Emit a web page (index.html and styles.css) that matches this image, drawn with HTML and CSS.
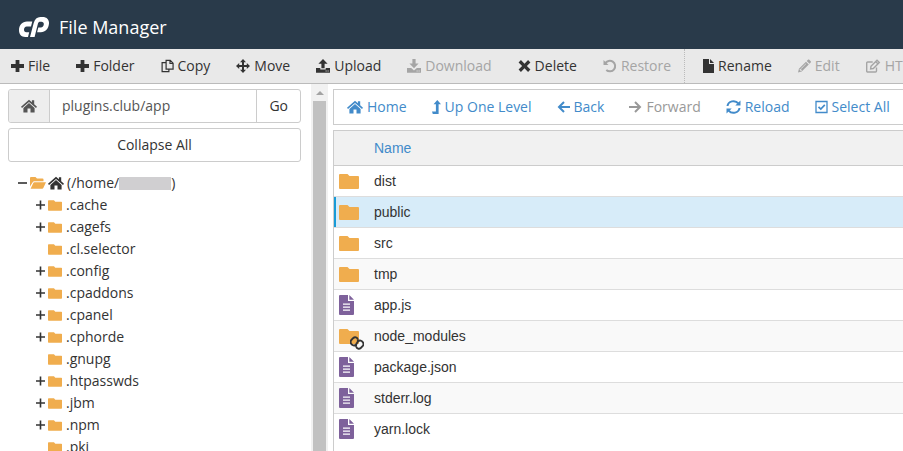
FILE: index.html
```
<!DOCTYPE html>
<html lang="en">
<head>
    <meta charset="UTF-8">
    <meta name="viewport" content="width=device-width, initial-scale=1.0">
    <title>File Manager</title>
    <link rel="stylesheet" href="styles.css">
</head>
<body>
    <!-- Icon sprite -->
    <svg class="sprite" xmlns="http://www.w3.org/2000/svg">
        <symbol id="i-plus" viewBox="0 0 13 13"><path d="M4.600.500h3.800v4.100H13v3.800H8.400v4.100H4.600V8.400H0V4.600h4.600z"/></symbol>
        <symbol id="i-copy" viewBox="0 0 14 14"><path d="M5.500 1h4.500l3 3v6.400H5.500zM9.700 1v3.300H13M5 3.300H1.200V13h7.300v-2.200" fill="none" stroke="currentColor" stroke-width="1.300"/></symbol>
        <symbol id="i-move" viewBox="0 0 14 14"><path d="M7 0l3 3.200H8v2.800h2.800V4L14 7l-3.200 3V8H8v2.800h2L7 14l-3-3.200h2V8H3.200v2L0 7l3.200-3v2H6V3.200H4z"/></symbol>
        <symbol id="i-upload" viewBox="0 0 14 14"><path d="M7 0l4.600 4.700H8.600V9.200H5.400V4.700H2.400zM0 9h4.300v1.400h5.400V9H14v4.700H0zM9.600 11.600v1h1v-1zm2 0v1h1v-1z" fill-rule="evenodd"/></symbol>
        <symbol id="i-download" viewBox="0 0 14 14"><path d="M5.400 0h3.200v4.500h3L7 9.200 2.400 4.500h3zM0 9h4.200L7 11.500 9.800 9H14v4.700H0zM9.600 11.600v1h1v-1zm2 0v1h1v-1z" fill-rule="evenodd"/></symbol>
        <symbol id="i-times" viewBox="0 0 12 13"><path d="M2.700 1L6 4.300 9.300 1l2.200 2.200-3.300 3.300 3.300 3.300L9.300 12 6 8.700 2.700 12 .5 9.800l3.300-3.300L.5 3.200z"/></symbol>
        <symbol id="i-undo" viewBox="0 0 14 14"><path d="M.5 1v5h5z"/><path d="M2.200 4.500A5.300 5.300 0 1 1 3.300 11" fill="none" stroke="currentColor" stroke-width="2"/></symbol>
        <symbol id="i-file" viewBox="0 0 11 14"><path d="M0 0h6v5h5v9H0zM7 0l4 4H7z"/></symbol>
        <symbol id="i-pencil" viewBox="0 0 14 14"><path d="M10.700.3c.5-.4 1-.4 1.500 0l1.500 1.500c.4.500.4 1 0 1.500L12.400 4.600 9.400 1.600zM8.600 2.400l3 3L4 13 0 14l1-4zM1.700 11l1.300 1.300L4 12l.1-1H3v-1l-1 .1zM8.500 4.200L3.200 9.500l.4.400L8.900 4.600z" fill-rule="evenodd"/></symbol>
        <symbol id="i-edit" viewBox="0 0 15 14"><path d="M10.500 8.500V12a1 1 0 0 1-1 1H1.700a1 1 0 0 1-1-1V4a1 1 0 0 1 1-1h5M5 7.200L11 1.300l2.300 2.300-6 5.900-2.700.5zM9.700 2.600l2.300 2.300" fill="none" stroke="currentColor" stroke-width="1.400"/></symbol>
        <symbol id="i-home" viewBox="0 0 16 14"><path d="M8 .8l2.900 2.500V1.300h2.300v4L16 7.700l-1 1.200-7-6-7 6-1-1.200z"/><path d="M8 4.100l5.600 4.800V13.500H9.500V9.500h-3v4H2.400V8.900z"/></symbol>
        <symbol id="i-up" viewBox="0 0 9 14"><path d="M5.300 0L9 4.300H6.600V14H.8L0 11.600h3.900V4.300H1.600z"/></symbol>
        <symbol id="i-left" viewBox="0 0 13 14"><path d="M7 2L2 7l5 5M2 7h11" fill="none" stroke="currentColor" stroke-width="2"/></symbol>
        <symbol id="i-right" viewBox="0 0 13 14"><path d="M6 2l5 5-5 5M11 7H0" fill="none" stroke="currentColor" stroke-width="2"/></symbol>
        <symbol id="i-reload" viewBox="0 0 15 14"><path d="M1.500 6a6 5.400 0 0 1 10.800-2.600M13.500 8a6 5.400 0 0 1-10.800 2.600" fill="none" stroke="currentColor" stroke-width="2"/><path d="M14.500.500v5H9.300zM.5 13.500v-5h5.200z"/></symbol>
        <symbol id="i-check" viewBox="0 0 13 14"><path d="M1 1.500h11v11H1z" fill="none" stroke="currentColor" stroke-width="1.300"/><path d="M3.500 6.800l2.300 2.300 4-4.200" fill="none" stroke="currentColor" stroke-width="1.700"/></symbol>
        <symbol id="i-folder" viewBox="0 0 20 15"><path d="M1 0h7.500l2 2H19a1 1 0 0 1 1 1v11a1 1 0 0 1-1 1H1a1 1 0 0 1-1-1V1a1 1 0 0 1 1-1z"/></symbol>
        <symbol id="i-folder-open" viewBox="0 0 16 12"><path d="M0 9.500V1a1 1 0 0 1 1-1h4.500L7 1.600h5.500a1 1 0 0 1 1 1v1.600H4.300a1.800 1.800 0 0 0-1.600 1z"/><path d="M4.300 5.200H16l-2.700 5.900a1.200 1.200 0 0 1-1 .6H.6l2.800-6a1 1 0 0 1 .9-.5z"/></symbol>
        <symbol id="i-doc" viewBox="0 0 15 20"><path d="M1 0h8v6h6v13a1 1 0 0 1-1 1H1a1 1 0 0 1-1-1V1a1 1 0 0 1 1-1zM10.300 0L15 4.700h-4.700zM4 8.500v1.200h7V8.500zm0 3v1.200h7v-1.200zm0 3v1.200h7v-1.200z" fill-rule="evenodd"/></symbol>
        <symbol id="i-link" viewBox="0 0 14 14"><path d="M6.800 8.400L5.900 8.900A3 3 0 0 1 2.200 3.100L3.300 2A2.700 2.700 0 0 1 7.800 3.400M7.200 5.600L8.100 5.100A3 3 0 0 1 11.800 10.900L10.700 12A2.700 2.700 0 0 1 6.200 10.600M7.800 3.400Q8.500 6 6 8M6.200 10.600Q5.500 8 8 6" fill="none" stroke="currentColor" stroke-width="1.900"/></symbol>
        <symbol id="i-expand" viewBox="0 0 9 10"><path d="M3.700.500h1.600v3.700H9v1.600H5.300v3.700H3.700V5.800H0V4.200h3.700z"/></symbol>
        <symbol id="i-collapse" viewBox="0 0 9 10"><path d="M0 4.200h9v1.600H0z"/></symbol>
    </svg>

    <header class="header">
        <svg class="logo" viewBox="0 0 30 20" role="img" aria-label="cPanel">
            <path d="M13.300 4.500L12 9.400H7.800C6 9.400 5 10.800 5 12.600c0 1.700.8 2.700 2.400 2.700h2.800L9 19.900H6.200C2.500 19.900 0 17.300 0 13.200 0 8.200 3.200 4.500 8 4.500z"/>
            <path d="M11 20l3.700-14C15.800 2 18 0 21.400 0h2.400c3.900 0 6.500 2.600 6.200 6.600-.4 5.100-3.500 8.600-8.200 8.600h-3.700l1.200-4.700h2.500c1.800 0 2.900-1.300 3-3.200.1-1.600-.8-2.600-2.300-2.600h-1.200c-1.300 0-2 .6-2.400 2L15.600 20z"/>
        </svg>
        <h1>File Manager</h1>
    </header>

    <div class="toolbar">
        <div class="tool-group">
            <button type="button"><svg class="w13"><use href="#i-plus"/></svg>File</button>
            <button type="button"><svg class="w13"><use href="#i-plus"/></svg>Folder</button>
            <button type="button"><svg class="w13"><use href="#i-copy"/></svg>Copy</button>
            <button type="button"><svg class="w14"><use href="#i-move"/></svg>Move</button>
            <button type="button"><svg class="w14"><use href="#i-upload"/></svg>Upload</button>
            <button type="button" disabled><svg class="w14"><use href="#i-download"/></svg>Download</button>
            <button type="button"><svg class="w13"><use href="#i-times"/></svg>Delete</button>
            <button type="button" disabled><svg class="w14"><use href="#i-undo"/></svg>Restore</button>
        </div>
        <div class="tool-group">
            <button type="button"><svg class="w11"><use href="#i-file"/></svg>Rename</button>
            <button type="button" disabled><svg class="w13"><use href="#i-pencil"/></svg>Edit</button>
            <button type="button" disabled><svg class="w15"><use href="#i-edit"/></svg>HTML Editor</button>
        </div>
    </div>

    <div class="main">
        <aside class="sidebar">
            <form class="path-form">
                <button type="button" class="path-home" aria-label="Home"><svg class="w16"><use href="#i-home"/></svg></button>
                <input type="text" value="plugins.club/app" aria-label="Path">
                <button type="submit" class="path-go">Go</button>
            </form>
            <button type="button" class="collapse">Collapse All</button>
            <ul class="tree">
                <li class="root">
                    <button type="button" aria-label="Collapse"><svg><use href="#i-collapse"/></svg></button>
                    <svg class="folder-open"><use href="#i-folder-open"/></svg>
                    <svg class="home"><use href="#i-home"/></svg>
                    <span class="label">(/home/<span class="redacted"></span>)</span>
                </li>
                <li><button type="button" aria-label="Expand"><svg><use href="#i-expand"/></svg></button><svg class="folder"><use href="#i-folder"/></svg>.cache</li>
                <li><button type="button" aria-label="Expand"><svg><use href="#i-expand"/></svg></button><svg class="folder"><use href="#i-folder"/></svg>.cagefs</li>
                <li class="leaf"><svg class="folder"><use href="#i-folder"/></svg>.cl.selector</li>
                <li><button type="button" aria-label="Expand"><svg><use href="#i-expand"/></svg></button><svg class="folder"><use href="#i-folder"/></svg>.config</li>
                <li><button type="button" aria-label="Expand"><svg><use href="#i-expand"/></svg></button><svg class="folder"><use href="#i-folder"/></svg>.cpaddons</li>
                <li><button type="button" aria-label="Expand"><svg><use href="#i-expand"/></svg></button><svg class="folder"><use href="#i-folder"/></svg>.cpanel</li>
                <li><button type="button" aria-label="Expand"><svg><use href="#i-expand"/></svg></button><svg class="folder"><use href="#i-folder"/></svg>.cphorde</li>
                <li class="leaf"><svg class="folder"><use href="#i-folder"/></svg>.gnupg</li>
                <li><button type="button" aria-label="Expand"><svg><use href="#i-expand"/></svg></button><svg class="folder"><use href="#i-folder"/></svg>.htpasswds</li>
                <li><button type="button" aria-label="Expand"><svg><use href="#i-expand"/></svg></button><svg class="folder"><use href="#i-folder"/></svg>.jbm</li>
                <li><button type="button" aria-label="Expand"><svg><use href="#i-expand"/></svg></button><svg class="folder"><use href="#i-folder"/></svg>.npm</li>
                <li class="leaf"><svg class="folder"><use href="#i-folder"/></svg>.pki</li>
            </ul>
        </aside>
        <div class="scrollbar">
            <span class="scroll-up"></span>
            <span class="scroll-thumb"></span>
        </div>

        <main class="content">
            <nav class="actions">
                <a href="#"><svg class="w16"><use href="#i-home"/></svg>Home</a>
                <a href="#"><svg class="w9"><use href="#i-up"/></svg>Up One Level</a>
                <a href="#"><svg class="w13"><use href="#i-left"/></svg>Back</a>
                <a href="#" class="disabled" aria-disabled="true"><svg class="w13"><use href="#i-right"/></svg>Forward</a>
                <a href="#"><svg class="w15"><use href="#i-reload"/></svg>Reload</a>
                <a href="#"><svg class="w13"><use href="#i-check"/></svg>Select All</a>
            </nav>
            <div class="file-list">
                <table class="files">
                    <thead>
                        <tr><th class="icon-col"></th><th>Name</th></tr>
                    </thead>
                    <tbody>
                        <tr><td class="icon-col"><svg class="dir"><use href="#i-folder"/></svg></td><td>dist</td></tr>
                        <tr class="selected"><td class="icon-col"><svg class="dir"><use href="#i-folder"/></svg></td><td>public</td></tr>
                        <tr><td class="icon-col"><svg class="dir"><use href="#i-folder"/></svg></td><td>src</td></tr>
                        <tr><td class="icon-col"><svg class="dir"><use href="#i-folder"/></svg></td><td>tmp</td></tr>
                        <tr><td class="icon-col"><svg class="doc"><use href="#i-doc"/></svg></td><td>app.js</td></tr>
                        <tr><td class="icon-col"><span class="linked"><svg class="dir"><use href="#i-folder"/></svg><svg class="link-badge"><use href="#i-link"/></svg></span></td><td>node_modules</td></tr>
                        <tr><td class="icon-col"><svg class="doc"><use href="#i-doc"/></svg></td><td>package.json</td></tr>
                        <tr><td class="icon-col"><svg class="doc"><use href="#i-doc"/></svg></td><td>stderr.log</td></tr>
                        <tr><td class="icon-col"><svg class="doc"><use href="#i-doc"/></svg></td><td>yarn.lock</td></tr>
                    </tbody>
                </table>
            </div>
        </main>
    </div>
</body>
</html>
```
FILE: styles.css
```
* {
    box-sizing: border-box;
}
body {
    margin: 0;
    height: 100vh;
    display: flex;
    flex-direction: column;
    overflow: hidden;
    background-color: #fff;
    color: #333;
    font-family: "Open Sans", sans-serif;
    font-size: 14px;
    line-height: 20px;
}
svg {
    fill: currentColor;
    flex: none;
    height: 14px;
}
button, input {
    font: inherit;
    color: inherit;
}
button {
    background: none;
    border: none;
    padding: 0;
    cursor: pointer;
}
.sprite {
    display: none;
}
.w9 {
    width: 9px;
}
.w11 {
    width: 11px;
}
.w13 {
    width: 13px;
}
.w14 {
    width: 14px;
}
.w15 {
    width: 15px;
}
.w16 {
    width: 16px;
}

/* Header */
.header {
    display: flex;
    align-items: center;
    gap: 10px;
    flex: none;
    padding: 15px 19px 10px;
    background-color: #293a4a;
    color: #fff;
}
.header h1 {
    margin: 0;
    font-size: 18px;
    font-weight: normal;
    line-height: 24px;
}
.logo {
    width: 30px;
    height: 20px;
}

/* Toolbar */
.toolbar {
    display: flex;
    flex: none;
    height: 35px;
    background-color: #e9e9e9;
    border-bottom: 1px solid #bbb;
    overflow: hidden;
}
.tool-group {
    display: flex;
    flex: none;
    gap: 26px;
    padding: 0 13px 0 11px;
}
.tool-group + .tool-group {
    border-left: 1px dotted #bbb;
    padding-left: 18px;
}
.tool-group button, .actions a {
    display: flex;
    align-items: center;
    gap: 4px;
    white-space: nowrap;
}
.tool-group button:disabled {
    color: #a5a5a5;
    cursor: default;
}

.main {
    display: flex;
    flex: 1;
    min-height: 0;
}

/* Sidebar */
.sidebar {
    flex: none;
    width: 311px;
    padding: 5px 10px 0 8px;
    overflow: hidden;
}
.path-form {
    display: flex;
    height: 34px;
    border: 1px solid #ccc;
    border-radius: 3px;
    overflow: hidden;
}
.path-home {
    display: flex;
    align-items: center;
    padding: 0 12px;
    background-color: #eee;
    color: #555;
}
.path-form input {
    flex: 1;
    min-width: 0;
    padding: 0 12px;
    border: solid #ccc;
    border-width: 0 1px;
    color: #555;
}
.path-go {
    padding: 0 12px;
}
.collapse {
    display: block;
    width: 100%;
    height: 34px;
    margin-top: 5px;
    border: 1px solid #ccc;
    border-radius: 3px;
}
.tree {
    list-style: none;
    margin: 10px 0 0;
    padding: 0;
}
.tree li {
    display: flex;
    align-items: center;
    height: 22px;
    padding-left: 28px;
}
.tree .root {
    padding-left: 10px;
}
.tree .leaf {
    padding-left: 40px;
}
.tree button {
    display: flex;
    margin-right: 3px;
}
.tree button svg {
    width: 9px;
    height: 10px;
}
.tree .folder {
    width: 14px;
    height: 11px;
    margin-right: 4px;
    color: #f0ad4e;
}
.tree .folder-open {
    width: 16px;
    height: 12px;
    margin-right: 2px;
    color: #f0ad4e;
}
.tree .home {
    width: 16px;
    margin-right: 3px;
}
.label {
    display: flex;
    align-items: center;
}
.redacted {
    width: 52px;
    height: 13px;
    background-color: #d0cfd1;
}

.scrollbar {
    display: flex;
    flex-direction: column;
    align-items: center;
    flex: none;
    width: 17px;
    background-color: #f1f1f1;
}
.scroll-up {
    margin: 7px 0 6px;
    border: 4px solid transparent;
    border-top: none;
    border-bottom-color: #a3a3a3;
}
.scroll-thumb {
    flex: 1;
    width: 13px;
    background-color: #c1c1c1;
}

/* File list */
.content {
    display: flex;
    flex-direction: column;
    flex: 1;
    min-width: 0;
    padding: 5px 0 0 5px;
    overflow: hidden;
}
.actions {
    display: flex;
    flex: none;
    gap: 25px;
    height: 36px;
    padding-left: 13px;
    border: 1px solid #ccc;
    border-right: none;
}
.actions a {
    color: #428bca;
    text-decoration: none;
}
.actions .disabled {
    color: #999;
}
.file-list {
    flex: 1;
    margin-top: 5px;
    border: 1px solid #ccc;
    border-width: 1px 0 0 1px;
}
.files {
    width: 100%;
    border-spacing: 0;
    font-family: "Liberation Sans", Arial, sans-serif;
}
.files th {
    height: 35px;
    padding: 0;
    background-color: #f1f1f1;
    border-bottom: 1px solid #ccc;
    color: #428bca;
    font-weight: normal;
    text-align: left;
}
.files td {
    height: 31px;
    padding: 0;
    border-bottom: 1px solid #ddd;
}
.files tbody tr:nth-child(even) {
    background-color: #f9f9f9;
}
.files tbody tr:last-child td {
    border-bottom-color: transparent;
}
.files tbody tr.selected {
    background-color: #d7ecf9;
}
.files .selected .icon-col {
    box-shadow: inset 2px 0 #179bd7;
}
.files .icon-col {
    width: 40px;
    padding-left: 5px;
}
.files svg {
    display: block;
}
.dir {
    width: 20px;
    height: 15px;
    color: #f0ad4e;
}
.doc {
    width: 15px;
    height: 20px;
    color: #7e619b;
}
.linked {
    position: relative;
    display: block;
}
.link-badge {
    position: absolute;
    left: 11px;
    top: 7px;
    width: 14px;
    height: 14px;
    color: #333;
}
```
